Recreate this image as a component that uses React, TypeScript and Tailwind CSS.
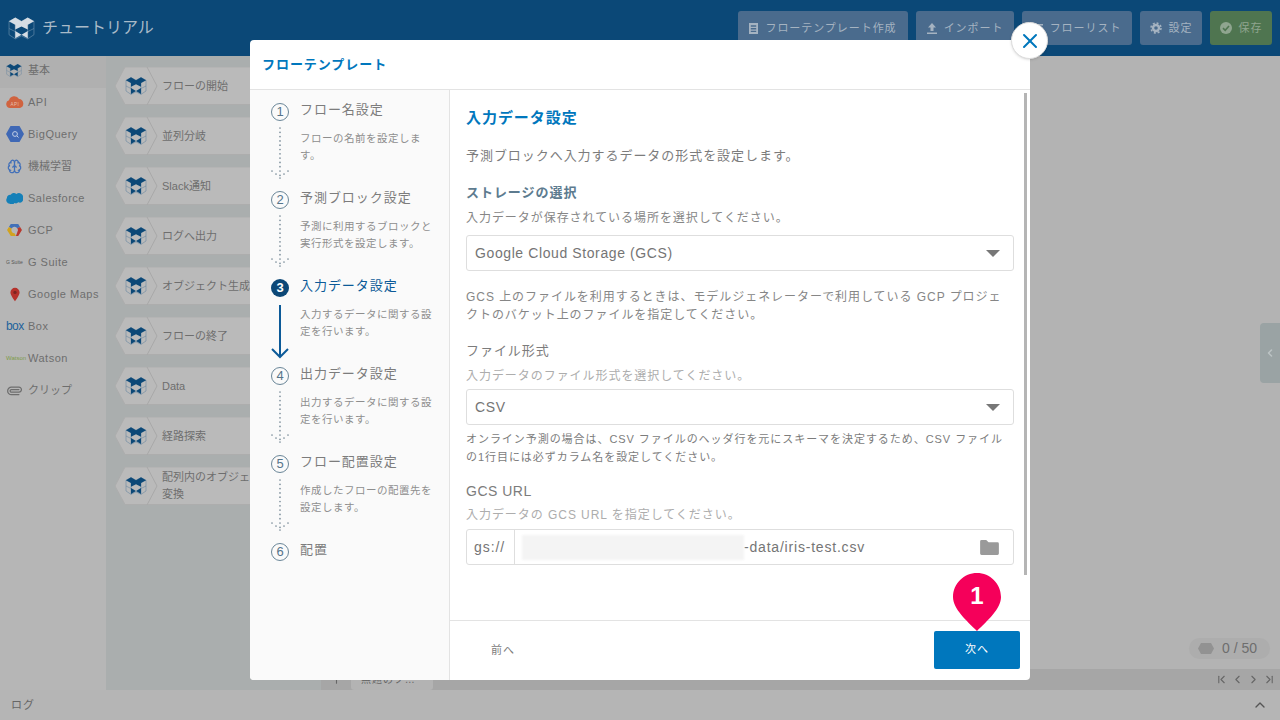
import { Brain, ChevronFirst, ChevronLast, ChevronLeft, ChevronRight, ChevronUp, Paperclip, Plus, X } from 'lucide-react';
import { ReactNode } from 'react';

function Logo({ fill, line, className }: { fill: string; line: string; className: string }) {
    return (
        <svg viewBox="0 0 26 24" className={className}>
            <path d="M1 5 7 2 13 5 19 2 25 5 25 18 19 22 13 19 7 22 1 18Z M1 5 7 8V22 M25 5 19 8V22 M1 12 7 15 M25 12 19 15" fill="none" stroke={line} strokeWidth="0.6" />
            <path d="M1 5 7 1.5 13 5 19 1.5 25 5 19 8.5 19 13 13 10 7 13 7 8.5Z" fill={fill} />
            <path d="M7 14.5 13 18 7 21.5Z M19 14.5 13 18 19 21.5Z" fill={fill} />
        </svg>
    );
}

function HeaderButton({ icon, label, green, width }: { icon: ReactNode; label: string; green?: boolean; width: string }) {
    return (
        <div className={`h-[34px] ${width} rounded-[3px] flex items-center justify-center gap-[7px] text-[11px] ${green ? 'bg-[#4f7550] text-[#8fa58f]' : 'bg-[#4a6b8d] text-[#a5b3c1]'}`}>
            {icon}
            <span>{label}</span>
        </div>
    );
}

const sideItems: { label: string; latin?: boolean; icon: ReactNode }[] = [
    { label: '基本', icon: <Logo fill="#0c4877" line="#5b7f9c" className="w-[16px] h-[15px]" /> },
    {
        label: 'API',
        latin: true,
        icon: (
            <svg viewBox="0 0 18 12" className="w-[18px] h-[12px]">
                <path d="M4 12a4 4 0 0 1-1-7.8A5.5 5.5 0 0 1 13 3a4.6 4.6 0 0 1 1 9Z" fill="#d0633f" />
                <text x="9" y="9.5" fontSize="4.5" fill="#e9c0ae" textAnchor="middle">API</text>
            </svg>
        ),
    },
    {
        label: 'BigQuery',
        latin: true,
        icon: (
            <svg viewBox="0 0 18 16" className="w-[18px] h-[16px]">
                <path d="M0 8 4.5 0h9L18 8l-4.5 8h-9Z" fill="#3f68b5" />
                <circle cx="9" cy="8" r="2.4" fill="none" stroke="#c2cfe6" strokeWidth="1" />
                <path d="M11 10l1.5 1.5" stroke="#c2cfe6" strokeWidth="1" />
            </svg>
        ),
    },
    { label: '機械学習', icon: <Brain size={15} color="#4270b8" className="mx-[1px]" /> },
    {
        label: 'Salesforce',
        latin: true,
        icon: (
            <svg viewBox="0 0 18 12" className="w-[17px] h-[12px]">
                <path d="M4 12A3.8 3.8 0 0 1 1 6a3.4 3.4 0 0 1 4-3.5A4 4 0 0 1 11 1.8 4.3 4.3 0 0 1 18 6a3.6 3.6 0 0 1-5 4.5 3.4 3.4 0 0 1-4 .8A3.5 3.5 0 0 1 4 12Z" fill="#1580b8" />
            </svg>
        ),
    },
    {
        label: 'GCP',
        latin: true,
        icon: (
            <svg viewBox="0 0 16 15" className="w-[15px] h-[14px] mx-[1px]">
                <path d="M4 1h8l2 3.4-3 1.2A3.4 3.4 0 0 0 5 6L2 4.4Z" fill="#4270b8" />
                <path d="M14 4.4 16 7.5 12 14H9.5L11 10a3.4 3.4 0 0 0 0-4.4Z" fill="#b8392f" />
                <path d="M2 4.4 0 7.5 4 14h5.5L8 11a3.4 3.4 0 0 1-3-5Z" fill="#d2a31e" />
            </svg>
        ),
    },
    { label: 'G Suite', latin: true, icon: <span className="block w-[18px] text-[5px] tracking-normal text-[#555] whitespace-nowrap">G Suite</span> },
    {
        label: 'Google Maps',
        latin: true,
        icon: (
            <svg viewBox="0 0 12 16" className="w-[11px] h-[15px] mx-[4px]">
                <path d="M6 0a5.5 5.5 0 0 1 5.5 5.5C11.500 9 6 16 6 16S.5 9 .5 5.5A5.5 5.500 0 0 1 6 0Z" fill="#b5322c" />
                <circle cx="6" cy="5.500" r="2" fill="#7c2521" />
            </svg>
        ),
    },
    { label: 'Box', latin: true, icon: <span className="block w-[18px] text-[12px] leading-none tracking-tighter text-[#1d639c]">box</span> },
    { label: 'Watson', latin: true, icon: <span className="block w-[18px] text-[6px] tracking-normal text-[#7f9c4a] whitespace-nowrap">Watson</span> },
    { label: 'クリップ', icon: <Paperclip size={15} color="#6e6e6e" className="mx-[1px] rotate-[45deg]" /> },
];

const blocks = ['フローの開始', '並列分岐', 'Slack通知', 'ログへ出力', 'オブジェクト生成', 'フローの終了', 'Data', '経路探索', '配列内のオブジェクト変換'];

function Block({ label }: { label: string }) {
    return (
        <div className="relative h-[38px] w-[197px] flex items-center">
            <svg viewBox="0 0 197 38" preserveAspectRatio="none" className="absolute inset-0 w-full h-full">
                <path d="M10 0H197V37.500H10L0 19Z" fill="#bababa" stroke="#adadad" />
                <path d="M32 0 42 19 32 38" fill="none" stroke="#a8a8a8" />
            </svg>
            <Logo fill="#0c4877" line="#5b7f9c" className="relative ml-[10px] w-[22px] h-[20px]" />
            <span className="relative ml-[15px] w-[112px] text-[11px] leading-[17px] tracking-normal text-[#6e6e6e] break-all">{label}</span>
        </div>
    );
}

const steps = [
    { no: '1', title: 'フロー名設定', desc: ['フローの名前を設定しま', 'す。'] },
    { no: '2', title: '予測ブロック設定', desc: ['予測に利用するブロックと', '実行形式を設定します。'] },
    { no: '3', title: '入力データ設定', desc: ['入力するデータに関する設', '定を行います。'], active: true },
    { no: '4', title: '出力データ設定', desc: ['出力するデータに関する設', '定を行います。'] },
    { no: '5', title: 'フロー配置設定', desc: ['作成したフローの配置先を', '設定します。'] },
    { no: '6', title: '配置', desc: [] },
];

const connectorDots = [
    ...Array.from({ length: 12 }, (_, i) => [10, 1 + i * 4.3]),
    [2, 44],
    [6, 47],
    [14, 47],
    [18, 44],
    [10, 51],
];

function Connector({ active }: { active?: boolean }) {
    return (
        <svg viewBox="0 0 20 56" className="w-[20px] h-[56px]">
            {active ? (
                <path d="M10 2V54 M2 46l8 8 8-8" fill="none" stroke="#0c5a98" strokeWidth="2" />
            ) : (
                connectorDots.map(([x, y]) => <circle key={`${x}-${y}`} cx={x} cy={y} r="0.85" fill="#7d8f9c" />)
            )}
        </svg>
    );
}

function Step({ no, title, desc, active, last }: { no: string; title: string; desc: string[]; active?: boolean; last?: boolean }) {
    return (
        <div className="flex h-[88px]">
            <div className="w-[20px] ml-[20px] flex flex-col items-center">
                <div className={`mt-[3px] w-[18px] h-[18px] rounded-full flex items-center justify-center text-[13px] tracking-normal shrink-0 ${active ? 'bg-[#0c4877] text-white font-bold' : 'border border-[#6a8698] text-[#55748a]'}`}>{no}</div>
                {!last && <div className="mt-[6px]"><Connector active={active} /></div>}
            </div>
            <div className="ml-[10px] flex-1">
                <div className={`text-[13px] leading-[20px] ${active ? 'text-[#0c5a98]' : 'text-[#7c7c7c]'}`}>{title}</div>
                <div className="mt-[10px] text-[10.500px] leading-[16.500px] tracking-[0.5px] text-[#8e8e8e] whitespace-nowrap">
                    {desc.map((d) => <div key={d}>{d}</div>)}
                </div>
            </div>
        </div>
    );
}

function Select({ value }: { value: string }) {
    return (
        <div className="h-[36px] border border-[#dedede] rounded-[3px] px-[8px] flex items-center justify-between text-[14px] text-[#757575]">
            <span className="tracking-[0.6px]">{value}</span>
            <span className="mr-[5px] w-0 h-0 border-l-[7px] border-r-[7px] border-t-[7px] border-l-transparent border-r-transparent border-t-[#777]" />
        </div>
    );
}

export default function App() {
    return (
        <div className="relative w-[1280px] h-[720px] overflow-hidden flex flex-col bg-[#b3b3b3] tracking-[0.95px] font-['Liberation_Sans','Noto_Sans_CJK_JP',sans-serif]">
            {/* Top header */}
            <header className="h-[56px] shrink-0 bg-[#0b4877] flex items-center pl-[8px] pr-[8px]">
                <Logo fill="#d5dde4" line="#6f93ae" className="w-[27px] h-[25px]" />
                <span className="ml-[7px] text-[16px] tracking-normal text-[#a9bac8]">チュートリアル</span>
                <div className="ml-auto flex gap-[8px]">
                    <HeaderButton width="w-[170px]" label="フローテンプレート作成" icon={
                        <svg viewBox="0 0 10 12" className="w-[9px] h-[11px]"><path d="M0 0h10v12H0Z M2 2.500v1.500h6V2.500Z M2 5.500V7h6V5.500Z M2 8.500V10h6V8.500Z" fill="#a5b3c1" fillRule="evenodd" /></svg>
                    } />
                    <HeaderButton width="w-[98px]" label="インポート" icon={
                        <svg viewBox="0 0 10 11" className="w-[10px] h-[11px]"><path d="M5 0 9 4.500H6.500V8h-3V4.500H1Z M0 9.500h10V11H0Z" fill="#a5b3c1" /></svg>
                    } />
                    <HeaderButton width="w-[110px]" label="フローリスト" icon={
                        <svg viewBox="0 0 10 10" className="w-[10px] h-[10px]"><path d="M0 1h10v1.500H0Z M0 4.500h10V6H0Z M0 8h10v1.500H0Z" fill="#a5b3c1" /></svg>
                    } />
                    <HeaderButton width="w-[62px]" label="設定" icon={
                        <svg viewBox="0 0 12 12" className="w-[12px] h-[12px]"><circle cx="6" cy="6" r="3" fill="none" stroke="#a5b3c1" strokeWidth="2.400" /><circle cx="6" cy="6" r="5" fill="none" stroke="#a5b3c1" strokeWidth="1.500" strokeDasharray="2 1.930" /></svg>
                    } />
                    <HeaderButton width="w-[62px]" green label="保存" icon={
                        <svg viewBox="0 0 12 12" className="w-[12px] h-[12px]"><circle cx="6" cy="6" r="6" fill="#8fa58f" /><path d="M3 6.200 5.200 8.300 9 4" fill="none" stroke="#4f7550" strokeWidth="1.600" /></svg>
                    } />
                </div>
            </header>

            {/* Main area */}
            <div className="flex-1 flex min-h-0">
                <aside className="w-[106px] shrink-0 bg-[#b6b6b6]">
                    {sideItems.map((item, i) => (
                        <div key={item.label} className={`h-[32px] pl-[6px] pb-[4px] flex items-center gap-[4px] text-[11px] leading-none text-[#6e6e6e] whitespace-nowrap ${item.latin ? 'tracking-[0.5px]' : 'tracking-normal'} ${i === 0 ? 'bg-[#b0b0b0]' : ''}`}>
                            <span className="w-[18px] flex items-center justify-start shrink-0">{item.icon}</span>
                            <span>{item.label}</span>
                        </div>
                    ))}
                </aside>
                <div className="w-[215px] shrink-0 bg-[#aaaeae] pt-[11px] pl-[9px] flex flex-col gap-[12px] overflow-hidden">
                    {blocks.map((b) => <Block key={b} label={b} />)}
                </div>
                <div className="flex-1 flex flex-col">
                    <div className="flex-1" />
                    <div className="h-[21px] bg-[#a6a6a6] flex items-center pl-[9px] pr-[4px] text-[#666]">
                        <Plus size={13} />
                        <div className="ml-[8px] w-[82px] h-[20px] rounded-b-[3px] bg-[#b3b3b3] text-[10px] px-[10px] flex items-center">無題のフ…</div>
                        <div className="ml-auto flex gap-[3px]">
                            <ChevronFirst size={13} />
                            <ChevronLeft size={13} />
                            <ChevronRight size={13} />
                            <ChevronLast size={13} />
                        </div>
                    </div>
                </div>
            </div>

            {/* Log bar */}
            <footer className="h-[30px] shrink-0 bg-[#b5b5b5] px-[11px] flex items-center justify-between text-[11px] text-[#666]">
                <span>ログ</span>
                <ChevronUp size={16} color="#555" className="mr-[1px]" />
            </footer>

            {/* Canvas overlays */}
            <div className="absolute left-[1260px] top-[323px] w-[20px] h-[60px] rounded-l-[4px] bg-[#9aa3a4] flex items-center justify-center">
                <ChevronLeft size={12} color="#bcc3c4" strokeWidth={3} />
            </div>
            <div className="absolute left-[1189px] top-[638px] w-[81px] h-[21px] rounded-full bg-[#adadad] flex items-center pl-[9px] gap-[8px] text-[14px] tracking-normal text-[#6e6e6e]">
                <svg viewBox="0 0 16 11" className="w-[16px] h-[11px]"><path d="M3 0h10l3 5.500L13 11H3L0 5.500Z" fill="#929292" /></svg>
                <span>0 / 50</span>
            </div>

            {/* Modal */}
            <div className="absolute left-[250px] top-[40px] w-[780px] h-[640px] bg-white rounded-[4px] flex flex-col">
                <div className="h-[50px] shrink-0 border-b border-[#e3e3e3] pl-[12px] flex items-center text-[13px] font-bold text-[#0077bd]">フローテンプレート</div>
                <div className="flex-1 flex min-h-0">
                    <div className="w-[200px] shrink-0 bg-[#fafafa] border-r border-[#e3e3e3] rounded-bl-[4px] pt-[10px]">
                        {steps.map((s, i) => <Step key={s.no} {...s} last={i === steps.length - 1} />)}
                    </div>
                    <div className="flex-1 flex flex-col min-w-0">
                        <div className="relative h-[530px] pl-[16px] pr-[16px] shrink-0">
                            <div className="absolute right-[3px] top-[3px] w-[3px] h-[482px] bg-[#b5b5b5]" />
                            <h2 className="mt-[18px] text-[15px] leading-[20px] font-bold text-[#0077bd]">入力データ設定</h2>
                            <p className="mt-[18px] text-[13px] leading-[20px] text-[#7c7c7c]">予測ブロックへ入力するデータの形式を設定します。</p>
                            <h3 className="mt-[17px] text-[13px] leading-[20px] font-bold text-[#5d7b8f]">ストレージの選択</h3>
                            <p className="mt-[5px] text-[12px] leading-[20px] text-[#868686]">入力データが保存されている場所を選択してください。</p>
                            <div className="mt-[7px]"><Select value="Google Cloud Storage (GCS)" /></div>
                            <p className="mt-[17px] text-[12px] leading-[18px] text-[#868686]">GCS 上のファイルを利用するときは、モデルジェネレーターで利用している GCP プロジェ<br />クトのバケット上のファイルを指定してください。</p>
                            <h3 className="mt-[17px] text-[13px] leading-[20px] text-[#7c7c7c]">ファイル形式</h3>
                            <p className="mt-[5px] text-[12px] leading-[20px] text-[#adadad]">入力データのファイル形式を選択してください。</p>
                            <div className="mt-[3px]"><Select value="CSV" /></div>
                            <p className="mt-[5px] text-[11px] leading-[18px] text-[#7c7c7c]">オンライン予測の場合は、CSV ファイルのヘッダ行を元にスキーマを決定するため、CSV ファイル<br />の1行目には必ずカラム名を設定してください。</p>
                            <h3 className="mt-[15px] text-[14px] leading-[20px] tracking-[0.5px] text-[#7c7c7c]">GCS URL</h3>
                            <p className="mt-[4px] text-[12px] leading-[20px] text-[#adadad]">入力データの GCS URL を指定してください。</p>
                            <div className="mt-[4px] h-[36px] border border-[#dedede] rounded-[3px] flex items-center text-[14px] text-[#757575]">
                                <span className="w-[48px] h-full shrink-0 border-r border-[#dedede] pl-[7px] flex items-center">gs://</span>
                                <span className="ml-[7px] w-[222px] h-[25px] shrink-0 bg-[#f4f4f4] blur-[1px]" />
                                <span className="tracking-[0.8px]">-data/iris-test.csv</span>
                                <svg viewBox="0 0 20 16" className="ml-auto mr-[14px] w-[19px] h-[15px]"><path d="M0 1.500A1.500 1.500 0 0 1 1.500 0h5L9 2.500h9.500A1.500 1.500 0 0 1 20 4v10.500a1.500 1.500 0 0 1-1.500 1.500h-17A1.500 1.500 0 0 1 0 14.500Z" fill="#9a9a9a" /></svg>
                            </div>
                        </div>
                        <div className="h-[60px] shrink-0 border-t border-[#e3e3e3] flex items-center justify-between pl-[41px] pr-[10px] pb-[2px]">
                            <span className="mt-[2px] text-[11px] text-[#7c7c7c]">前へ</span>
                            <div className="w-[86px] h-[38px] rounded-[2px] bg-[#0077bd] text-white text-[11px] flex items-center justify-center">次へ</div>
                        </div>
                    </div>
                </div>
            </div>

            {/* Close button */}
            <div className="absolute left-[1011px] top-[22px] w-[37px] h-[37px] rounded-full bg-white border border-[#dddddd] shadow-sm flex items-center justify-center">
                <X size={24} color="#0077bd" strokeWidth={2} />
            </div>

            {/* Tutorial pin */}
            <div className="absolute left-[953px] top-[573px] w-[48px] h-[58px] flex justify-center">
                <svg viewBox="0 0 48 58" className="absolute inset-0 w-full h-full">
                    <path d="M24 0C37 0 48 10.500 48 24 48 36 34 48 24 58 14 48 0 36 0 24 0 10.500 11 0 24 0Z" fill="#f5005a" />
                </svg>
                <span className="relative mt-[9px] text-[24px] leading-[28px] font-bold tracking-normal text-white">1</span>
            </div>
        </div>
    );
}
